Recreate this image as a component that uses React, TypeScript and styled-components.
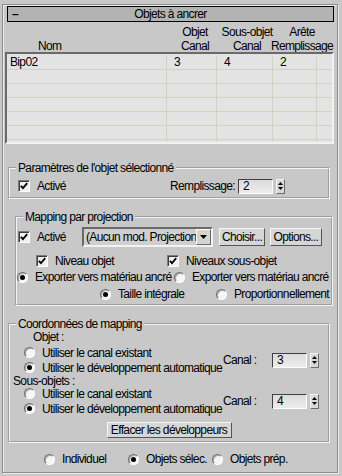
import React from 'react';
import styled, { createGlobalStyle } from 'styled-components';

const GlobalStyle = createGlobalStyle`
  html, body { margin: 0; padding: 0; background: #c8c8c8; }
  body {
    font-family: "Liberation Sans", Arial, sans-serif;
    font-size: 12px;
    letter-spacing: -0.65px;
    line-height: 14px;
    color: #000;
  }
  * { box-sizing: border-box; }
`;

const Page = styled.div`
  width: 342px;
  height: 476px;
  padding: 4px 0 0 2px;
  overflow: hidden;
  background: #c8c8c8;
`;

const Rollout = styled.div`
  width: 336px;
  height: 469px;
  border: 1px solid #8c8c8c;
  box-shadow: inset 1px 1px 0 #ececec, 1px 1px 0 #ececec;
  display: flex;
  flex-direction: column;
  align-items: flex-start;
`;

const TitleBar = styled.div`
  margin: 1px 0 0 4px;
  width: 327px;
  height: 16px;
  border: 1px solid #000;
  background: #b3b3b3;
  display: grid;
  grid-template-columns: 20px 1fr 20px;
  align-items: center;
  line-height: 14px;
`;

const Dash = styled.span`
  padding-left: 4px;
  font-weight: bold;
`;

const TitleText = styled.span`
  text-align: center;
`;

const HeaderRow = styled.div`
  margin-left: 2px;
  width: 329px;
  height: 30px;
  padding-top: 3px;
  display: grid;
  grid-template-columns: 164px 52px 52px 58px;
  white-space: nowrap;
`;

const HeadCell = styled.div<{ $left?: boolean }>`
  display: flex;
  flex-direction: column;
  align-items: ${p => (p.$left ? 'flex-start' : 'center')};
  justify-content: flex-end;
  padding-left: ${p => (p.$left ? '33px' : '0')};
`;

const List = styled.div`
  margin-left: 2px;
  width: 329px;
  height: 92px;
  border: 2px solid;
  border-color: #6a6a6a #f2f2f2 #f2f2f2 #6a6a6a;
  background: #e3e3e3;
  padding-top: 2px;
  overflow: hidden;
`;

const ListRow = styled.div`
  display: grid;
  grid-template-columns: 160px 50px 56px 44px 1fr;
  height: 14px;
  border-bottom: 1px solid #d2d1c2;
  line-height: 13px;
`;

const ListCell = styled.div<{ $pad: number }>`
  padding-left: ${p => p.$pad}px;
  border-right: 1px solid #d2d1c2;
  &:last-child { border-right: none; }
`;

const Group = styled.fieldset<{ $x: number; $w: number; $top: number; $pb?: number }>`
  margin: ${p => p.$top}px 0 0 ${p => p.$x}px;
  width: ${p => p.$w}px;
  min-width: 0;
  border: 2px groove #f4f4f4;
  padding: 0 0 ${p => p.$pb ?? 3}px 0;
`;

const Legend = styled.legend`
  margin-left: 6px;
  padding: 0 2px;
  line-height: 14px;
`;

const Row = styled.div<{ $cols: string; $h: number; $mt?: number; $pl?: number }>`
  display: grid;
  grid-template-columns: ${p => p.$cols};
  align-items: center;
  height: ${p => p.$h}px;
  margin-top: ${p => p.$mt ?? 0}px;
  padding-left: ${p => p.$pl ?? 0}px;
  white-space: nowrap;
`;

const Label = styled.div<{ $h: number; $pl: number; $mt?: number }>`
  height: ${p => p.$h}px;
  line-height: ${p => p.$h}px;
  padding-left: ${p => p.$pl}px;
  margin-top: ${p => p.$mt ?? 0}px;
`;

const Item = styled.label`
  display: flex;
  align-items: center;
  gap: 7px;
`;

const CheckBox = styled.span`
  width: 12px;
  height: 12px;
  flex: none;
  display: flex;
  align-items: center;
  justify-content: center;
  background: #f0f0f0;
  border: 1px solid;
  border-color: #7a7a7a #ffffff #ffffff #7a7a7a;
  box-shadow: inset 1px 1px 0 #3c3c3c;
`;

const RadioDot = styled.span<{ $on?: boolean }>`
  width: 11px;
  height: 11px;
  flex: none;
  border-radius: 50%;
  display: flex;
  align-items: center;
  justify-content: center;
  background: #f6f6f6;
  border: 1px solid;
  border-color: #6c6c6c #ffffff #ffffff #6c6c6c;
  box-shadow: inset 1px 1px 0 #a8a8a8;
  &::after {
    content: '';
    display: ${p => (p.$on ? 'block' : 'none')};
    width: 5px;
    height: 5px;
    border-radius: 50%;
    background: #000;
  }
`;

const Spinner = styled.div`
  display: flex;
  align-items: center;
  gap: 3px;
`;

const SpinField = styled.div`
  width: 35px;
  height: 15px;
  padding-left: 4px;
  line-height: 13px;
  background: linear-gradient(#dcdcdc, #ececec);
  border: 1px solid;
  border-color: #404040 #ffffff #ffffff #404040;
`;

const SpinArrows = styled.div`
  width: 9px;
  height: 15px;
  display: flex;
  flex-direction: column;
  align-items: center;
  justify-content: space-evenly;
  background: #d8d8d8;
  border: 1px solid;
  border-color: #f4f4f4 #6c6c6c #6c6c6c #f4f4f4;
`;

const Combo = styled.div`
  height: 20px;
  display: flex;
  align-items: center;
  border: 2px solid;
  border-color: #6a6a6a #f2f2f2 #f2f2f2 #6a6a6a;
  background: #cfcfcf;
  overflow: hidden;
`;

const ComboText = styled.span`
  flex: 1;
  padding-left: 2px;
  overflow: hidden;
  white-space: nowrap;
`;

const ComboButton = styled.span`
  width: 15px;
  height: 16px;
  flex: none;
  display: flex;
  align-items: center;
  justify-content: center;
  background: #d6d3cc;
  border: 1px solid;
  border-color: #ffffff #6c6c6c #6c6c6c #ffffff;
`;

const Button = styled.button<{ $h?: number; $ml?: number }>`
  height: ${p => p.$h ?? 18}px;
  margin-left: ${p => p.$ml ?? 0}px;
  padding: 0;
  font: inherit;
  letter-spacing: inherit;
  line-height: 14px;
  color: #000;
  background: #d6d6d6;
  border: 1px solid;
  border-color: #f6f6f6 #555 #555 #f6f6f6;
  white-space: nowrap;
`;

const Center = styled.div<{ $mt: number }>`
  display: flex;
  justify-content: center;
  margin-top: ${p => p.$mt}px;
`;

const CanalCell = styled.div`
  display: flex;
  align-items: center;
`;

const CanalLabel = styled.span<{ $w: number }>`
  width: ${p => p.$w}px;
`;

const Check = () => (
  <CheckBox>
    <svg width="8" height="8" viewBox="0 0 8 8">
      <polyline points="0.8,3.8 3,6.2 7.2,1.2" fill="none" stroke="#000" strokeWidth="1.8" />
    </svg>
  </CheckBox>
);

const CheckItem = ({ text }: { text: string }) => (
  <Item>
    <Check />
    {text}
  </Item>
);

const RadioItem = ({ text, on }: { text: string; on?: boolean }) => (
  <Item>
    <RadioDot $on={on} />
    {text}
  </Item>
);

const SpinBox = ({ value }: { value: string }) => (
  <Spinner>
    <SpinField>{value}</SpinField>
    <SpinArrows>
      <svg width="5" height="3" viewBox="0 0 5 3"><polygon points="2.5,0 5,3 0,3" fill="#000" /></svg>
      <svg width="5" height="3" viewBox="0 0 5 3"><polygon points="0,0 5,0 2.5,3" fill="#000" /></svg>
    </SpinArrows>
  </Spinner>
);

const rows = [
  { nom: 'Bip02', obj: '3', sub: '4', edge: '2' },
  { nom: '', obj: '', sub: '', edge: '' },
  { nom: '', obj: '', sub: '', edge: '' },
  { nom: '', obj: '', sub: '', edge: '' },
  { nom: '', obj: '', sub: '', edge: '' },
  { nom: '', obj: '', sub: '', edge: '' },
  { nom: '', obj: '', sub: '', edge: '' },
];

export default function App() {
  return (
    <Page>
      <GlobalStyle />
      <Rollout>
        <TitleBar>
          <Dash>–</Dash>
          <TitleText>Objets à ancrer</TitleText>
          <span />
        </TitleBar>

        <HeaderRow>
          <HeadCell $left><span>Nom</span></HeadCell>
          <HeadCell><span>Objet</span><span>Canal</span></HeadCell>
          <HeadCell><span>Sous-objet</span><span>Canal</span></HeadCell>
          <HeadCell><span>Arête</span><span>Remplissage</span></HeadCell>
        </HeaderRow>

        <List>
          {rows.map((r, i) => (
            <ListRow key={i}>
              <ListCell $pad={3}>{r.nom}</ListCell>
              <ListCell $pad={7}>{r.obj}</ListCell>
              <ListCell $pad={7}>{r.sub}</ListCell>
              <ListCell $pad={7}>{r.edge}</ListCell>
              <ListCell $pad={0} />
            </ListRow>
          ))}
        </List>

        <Group $x={5} $w={322} $top={17}>
          <Legend>Paramètres de l'objet sélectionné</Legend>
          <Row $cols="152px auto" $h={16} $mt={3} $pl={8}>
            <CheckItem text="Activé" />
            <CanalCell>
              <CanalLabel $w={68}>Remplissage:</CanalLabel>
              <SpinBox value="2" />
            </CanalCell>
          </Row>
        </Group>

        <Group $x={12} $w={318} $top={11} $pb={2}>
          <Legend>Mapping par projection</Legend>
          <Row $cols="64px 131px 52px 57px" $h={20} $mt={3} $pl={1}>
            <CheckItem text="Activé" />
            <Combo>
              <ComboText>(Aucun mod. Projection</ComboText>
              <ComboButton>
                <svg width="7" height="4" viewBox="0 0 7 4"><polygon points="0,0 7,0 3.5,4" fill="#000" /></svg>
              </ComboButton>
            </Combo>
            <Button $ml={6}>Choisir...</Button>
            <Button $ml={5}>Options...</Button>
          </Row>
          <Row $cols="131px auto" $h={16} $mt={6} $pl={19}>
            <CheckItem text="Niveau objet" />
            <CheckItem text="Niveaux sous-objet" />
          </Row>
          <Row $cols="157px auto" $h={16} $pl={0}>
            <RadioItem text="Exporter vers matériau ancré" on />
            <RadioItem text="Exporter vers matériau ancré" />
          </Row>
          <Row $cols="116px auto" $h={16} $mt={1} $pl={83}>
            <RadioItem text="Taille intégrale" on />
            <RadioItem text="Proportionnellement" />
          </Row>
        </Group>

        <Group $x={5} $w={322} $top={11} $pb={3}>
          <Legend>Coordonnées de mapping</Legend>
          <Label $h={13} $pl={23}>Objet :</Label>
          <Row $cols="199px auto" $h={30} $mt={1} $pl={14}>
            <div>
              <Row $cols="auto" $h={15}><RadioItem text="Utiliser le canal existant" /></Row>
              <Row $cols="auto" $h={15}><RadioItem text="Utiliser le développement automatique" on /></Row>
            </div>
            <CanalCell>
              <CanalLabel $w={49}>Canal :</CanalLabel>
              <SpinBox value="3" />
            </CanalCell>
          </Row>
          <Label $h={13} $pl={3}>Sous-objets :</Label>
          <Row $cols="199px auto" $h={30} $mt={-2} $pl={14}>
            <div>
              <Row $cols="auto" $h={15}><RadioItem text="Utiliser le canal existant" /></Row>
              <Row $cols="auto" $h={15}><RadioItem text="Utiliser le développement automatique" on /></Row>
            </div>
            <CanalCell>
              <CanalLabel $w={49}>Canal :</CanalLabel>
              <SpinBox value="4" />
            </CanalCell>
          </Row>
          <Center $mt={6}>
            <Button $h={16} style={{ width: 125 }}>Effacer les développeurs</Button>
          </Center>
        </Group>

        <Row $cols="84px 84px auto" $h={14} $mt={9} $pl={41}>
          <RadioItem text="Individuel" />
          <RadioItem text="Objets sélec." on />
          <RadioItem text="Objets prép." />
        </Row>
      </Rollout>
    </Page>
  );
}
